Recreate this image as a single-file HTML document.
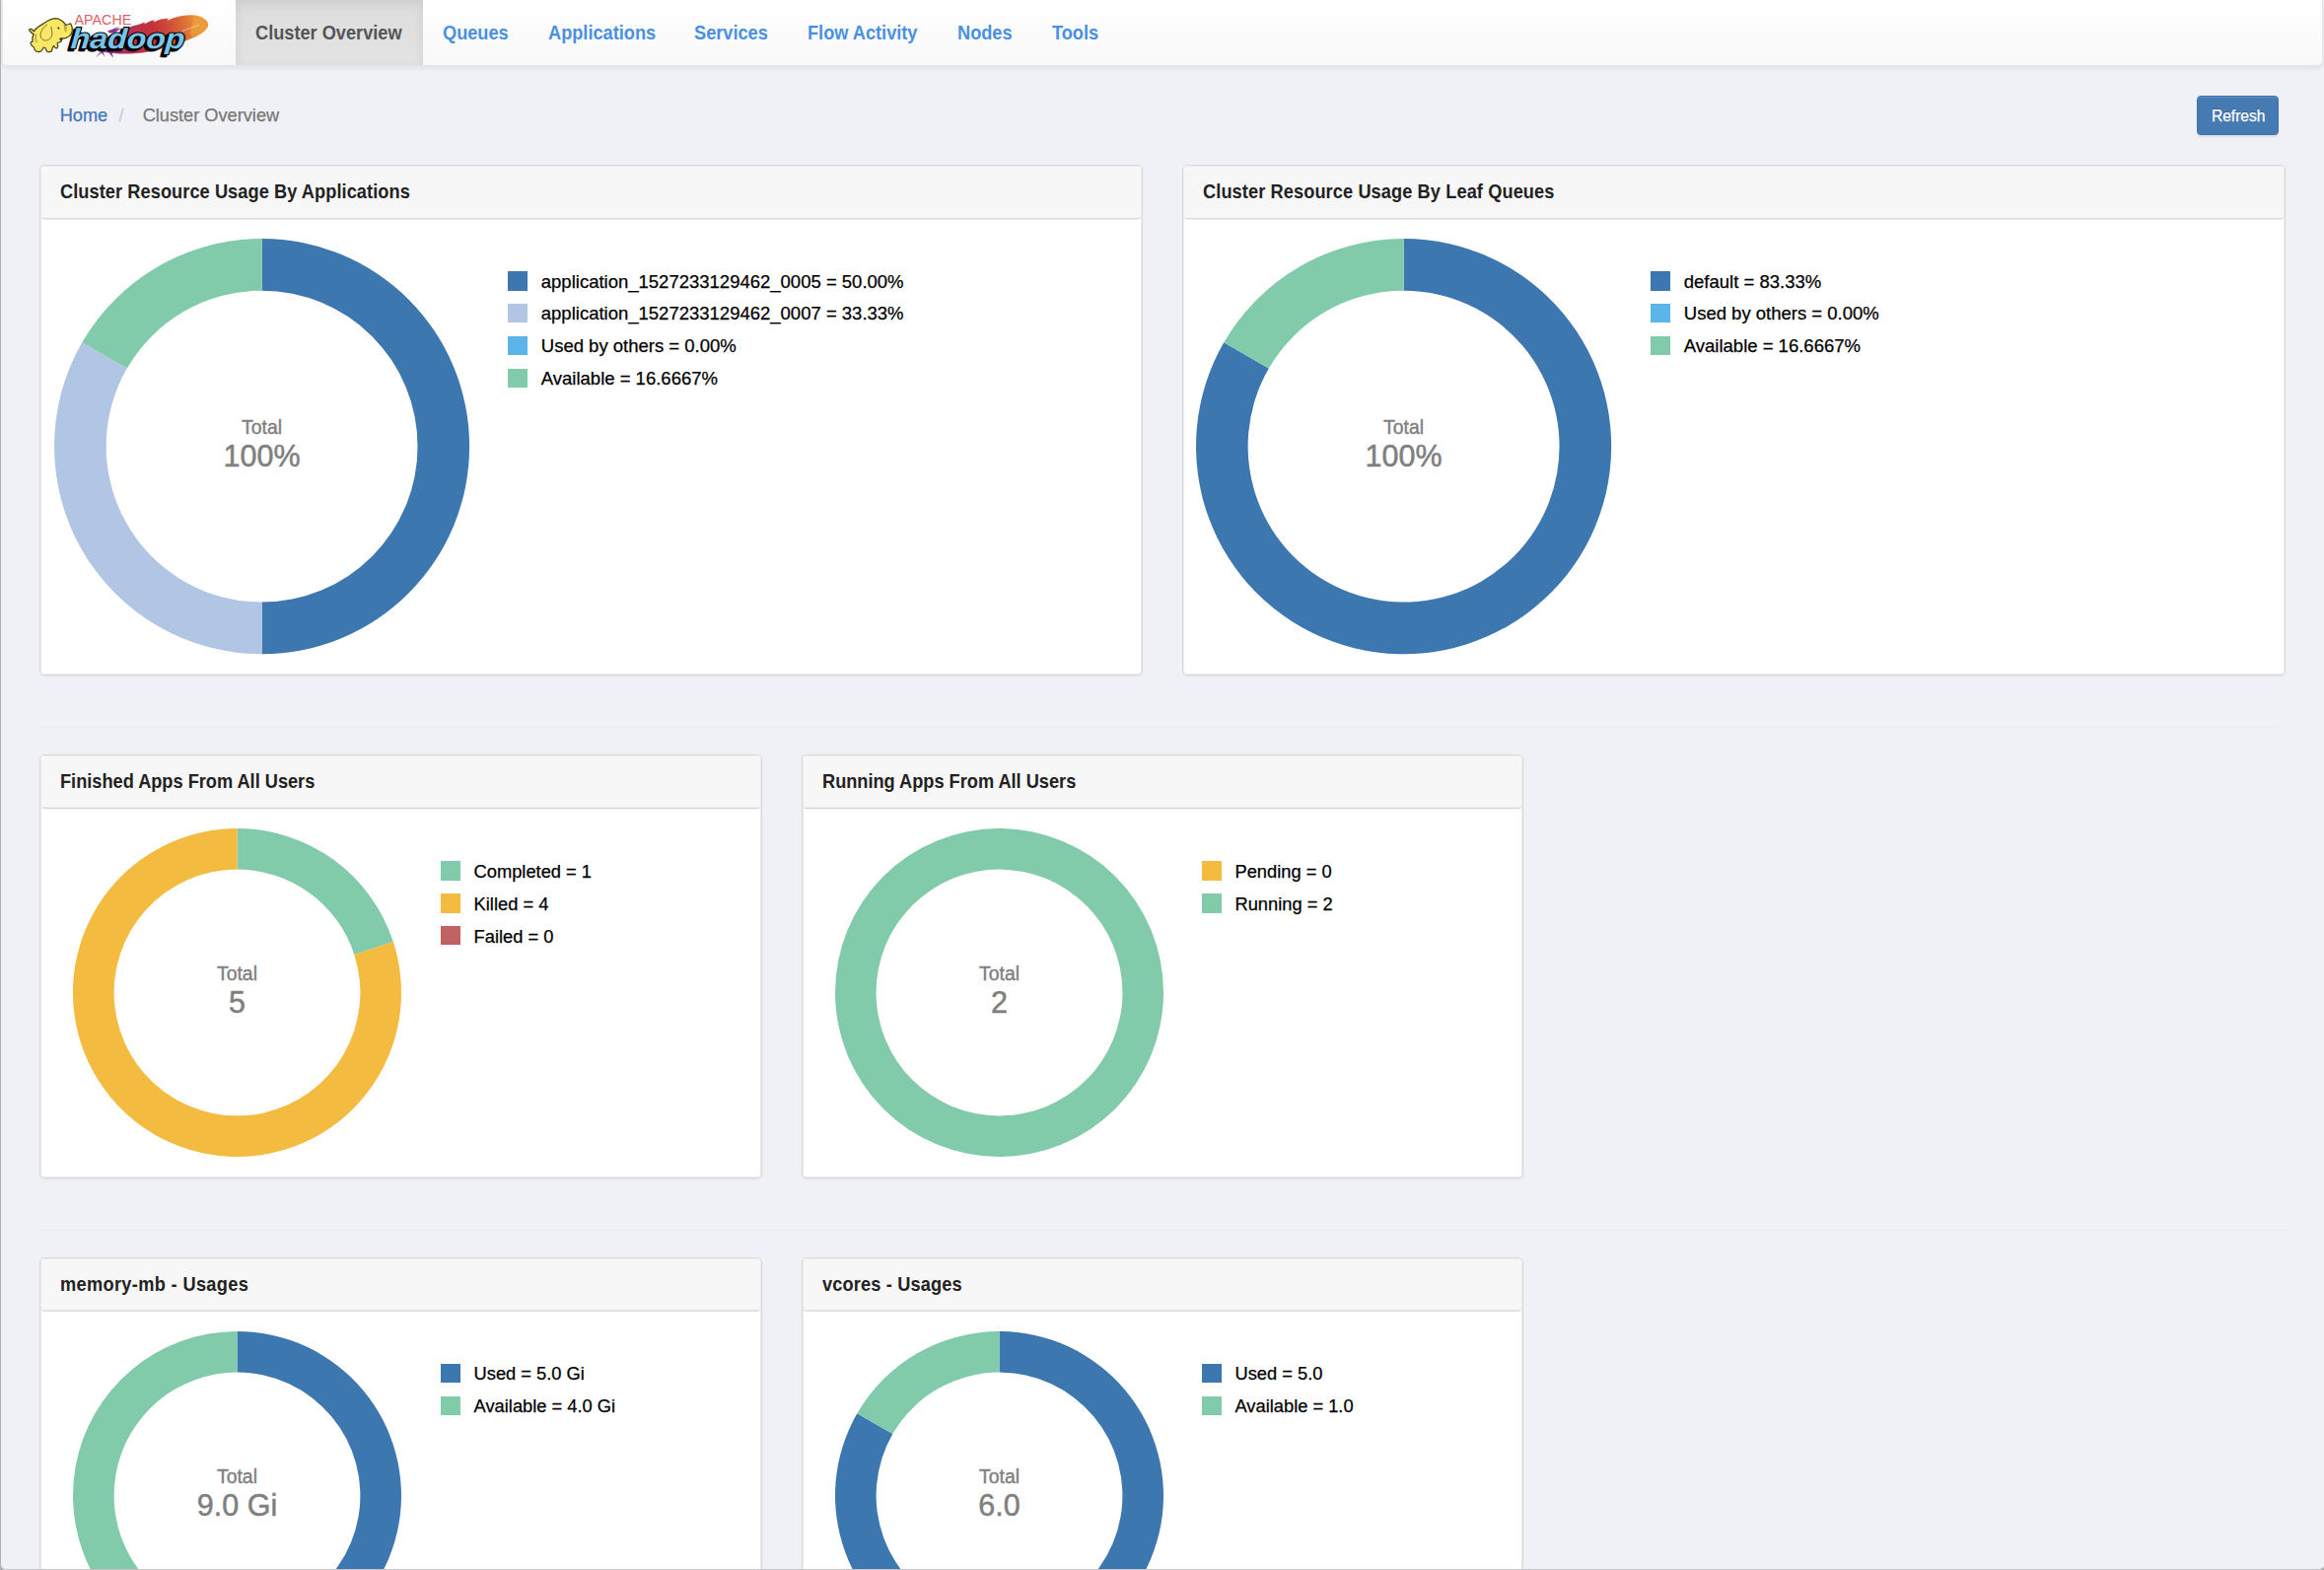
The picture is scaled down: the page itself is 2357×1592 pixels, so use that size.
<!DOCTYPE html>
<html lang="en"><head><meta charset="utf-8"><title>YARN</title>
<style>
html,body{margin:0;padding:0}
body{width:2357px;height:1592px;overflow:hidden;background:#f0f1f6;font-family:"Liberation Sans", sans-serif;position:relative}
.t{position:absolute;white-space:nowrap;text-decoration:none}
.nav{position:absolute;left:1.5px;top:-1px;width:2354.5px;height:67.6px;box-sizing:border-box;background:linear-gradient(to bottom,#fff 0,#f8f8f8 100%);border:1.3px solid #e7e7e7;border-radius:0 0 5px 5px;box-shadow:0 1.3px 5.5px rgba(0,0,0,.075)}
.active{position:absolute;left:239.2px;top:0;width:189.4px;height:66.4px;background:linear-gradient(to bottom,#dddddd 0,#e3e3e3 100%);box-shadow:inset 0 4px 12px rgba(0,0,0,.075)}
.btn{position:absolute;left:2228px;top:96.9px;width:83.3px;height:39.9px;box-sizing:border-box;border-radius:4px;background:#467ab3;border:1.3px solid #3f73ad;box-shadow:inset 0 1.3px 0 rgba(255,255,255,.15),0 1.3px 1.3px rgba(0,0,0,.075)}
.panel{position:absolute;box-sizing:border-box;background:#fff;border:1px solid #dbdbdc;border-radius:5px;box-shadow:0 1px 2px rgba(0,0,0,.06);overflow:hidden}
.pin{box-sizing:border-box;height:100%;border:1px solid #ebebeb;border-radius:4px}
.ph{height:53px;box-sizing:border-box;background:#f7f7f7;border-bottom:1px solid #dadada;box-shadow:0 1px 0 #eee;border-radius:3px}
.sq{position:absolute;width:20px;height:19.6px}
.donut{position:absolute;font-family:"Liberation Sans", sans-serif}
.hr{position:absolute;left:40.3px;width:2276.7px;height:2px;background:linear-gradient(#ededec 50%,#eff0f3 50%)}
.frame{position:absolute;left:0;top:-20px;width:2358px;height:1612px;box-sizing:border-box;border-left:1px solid #b0b0b1;border-bottom:1px solid #c6c6ca;border-radius:0 0 7px 6px;box-shadow:0 0 0 12px #a8a8aa;pointer-events:none}
</style></head>
<body>
<div class="nav"></div>
<div class="active"></div>
<a href="#" class="t" style="left:258.8px;top:20.87px;font-size:19.3px;line-height:25.09px;font-weight:bold;color:#555;;transform:scaleX(.943);transform-origin:0 50%">Cluster Overview</a>
<a href="#" class="t" style="left:448.8px;top:20.87px;font-size:19.3px;line-height:25.09px;font-weight:bold;color:#4a90e2;;transform:scaleX(.943);transform-origin:0 50%">Queues</a>
<a href="#" class="t" style="left:555.6px;top:20.87px;font-size:19.3px;line-height:25.09px;font-weight:bold;color:#4a90e2;;transform:scaleX(.943);transform-origin:0 50%">Applications</a>
<a href="#" class="t" style="left:703.8px;top:20.87px;font-size:19.3px;line-height:25.09px;font-weight:bold;color:#4a90e2;;transform:scaleX(.943);transform-origin:0 50%">Services</a>
<a href="#" class="t" style="left:819px;top:20.87px;font-size:19.3px;line-height:25.09px;font-weight:bold;color:#4a90e2;;transform:scaleX(.943);transform-origin:0 50%">Flow Activity</a>
<a href="#" class="t" style="left:970.8px;top:20.87px;font-size:19.3px;line-height:25.09px;font-weight:bold;color:#4a90e2;;transform:scaleX(.943);transform-origin:0 50%">Nodes</a>
<a href="#" class="t" style="left:1066.6px;top:20.87px;font-size:19.3px;line-height:25.09px;font-weight:bold;color:#4a90e2;;transform:scaleX(.943);transform-origin:0 50%">Tools</a>
<svg class="logo" style="position:absolute;left:0;top:0" width="230" height="66" viewBox="0 0 230 66">
<defs>
<linearGradient id="fg" gradientUnits="userSpaceOnUse" x1="100" y1="50" x2="212" y2="22">
<stop offset="0" stop-color="#7d2a8c"/><stop offset="0.16" stop-color="#9b2c72"/><stop offset="0.3" stop-color="#b8314f"/><stop offset="0.52" stop-color="#c4323a"/><stop offset="0.66" stop-color="#cf4f3a"/><stop offset="0.8" stop-color="#dd7436"/><stop offset="0.88" stop-color="#e88f38"/><stop offset="1" stop-color="#ee9e3c"/>
</linearGradient>
</defs>
<!-- feather -->
<path fill="url(#fg)" d="M104,52.5 C112,41 122,32 134,26.6 L141,24.8 L147,22.6 L146.2,24.6 L152,21.4 L157,20.2 L155.5,22.6 L163,19.6 L171,18.6 L169.4,21 C178,17 188,14.6 197,15.6 C205,16.6 211,20.5 211.2,25 C211,30 203,35.5 193,39.5 C180,45 165,49.5 150,52.4 C137,54.8 120,55.6 104,52.5 Z"/>
<path fill="#ec9c3c" opacity=".75" d="M197,15.6 C205,16.6 211,20.5 211.2,25 C211,30 203,35.5 196,38.4 L192.5,34 C194.5,28 196,21 197,15.6 Z"/>
<path fill="none" stroke="#fbe9d8" stroke-width=".7" opacity=".8" d="M185,31.5 C191,29 197,27 202,25.2"/>
<!-- purple spikes -->
<path fill="#8c3493" d="M109,31.6 L121.5,26.8 L117.5,29.6 L123,28.6 L116,33.4 L111,33.6 Z"/>
<path fill="#8c3493" d="M97,58.6 L103.5,50.6 L109,50.6 L104.6,53 L106.5,57.4 L102.8,53.6 Z M108.5,50.8 L118,51.6 L113.4,53 L115,58.8 L110,53 Z"/>
<!-- APACHE -->
<text x="75.6" y="25.4" font-family="'Liberation Sans',sans-serif" font-size="15.2" textLength="57.6" lengthAdjust="spacingAndGlyphs" fill="#db6466">APACHE</text>
<!-- hadoop -->
<g transform="translate(71.3,48.9) skewX(-4)" font-family="'Liberation Sans',sans-serif" font-weight="bold" font-style="italic" font-size="28.8">
<text x="-2.3" y="1.7" textLength="115.5" lengthAdjust="spacingAndGlyphs" fill="#000" stroke="#000" stroke-width="2.4" stroke-linejoin="round">hadoop</text>
<text x="0" y="0" textLength="115.5" lengthAdjust="spacingAndGlyphs" fill="#79c3e6" stroke="#000" stroke-width="2.2" stroke-linejoin="round" paint-order="stroke">hadoop</text>
</g>
<!-- elephant -->
<g transform="translate(20,5) scale(0.04303)" stroke-linejoin="round" stroke-linecap="round">
<path fill="#f9e766" stroke="#4e4718" stroke-width="30" d="M330,700 C290,670 250,640 222,590 C235,560 285,560 300,590 C315,600 325,615 335,625 C360,580 420,520 560,440 C640,380 740,320 840,315 C940,320 1030,390 1085,470 C1120,475 1160,450 1195,440 C1225,470 1240,540 1238,610 C1225,690 1180,745 1100,775 C1060,790 1020,790 985,790 C1000,830 985,870 930,880 C900,882 885,895 885,910 C905,950 905,1000 880,1012 C860,1018 835,1015 828,1000 C822,985 820,970 800,962 C780,985 765,1030 760,1060 C755,1095 730,1108 690,1108 C650,1108 625,1090 622,1050 C620,1025 600,1005 565,1000 C545,1030 530,1060 510,1085 C480,1105 420,1105 380,1090 C350,1070 345,1030 335,1000 C300,985 270,950 258,905 C250,880 270,860 300,870 C290,810 300,740 330,690 Z"/>
<path fill="none" stroke="#6b6127" stroke-width="20" d="M640,470 C560,520 490,620 490,720 C495,800 560,850 640,835 C710,815 760,760 765,680 C765,620 750,560 740,520"/>
<path fill="none" stroke="#6b6127" stroke-width="16" d="M1050,470 C1060,500 1075,540 1060,580 M1085,470 C1100,520 1100,580 1085,630 M380,700 C370,760 370,830 400,880"/>
<circle cx="915" cy="545" r="24" fill="#2a2612"/>
<ellipse cx="972" cy="805" rx="34" ry="28" fill="#2a2612"/>
</g>
</svg>

<a href="#" class="t" style="left:60.7px;top:106.16px;font-size:18.2px;line-height:23.66px;font-weight:normal;color:#4178b5;;-webkit-text-stroke:.25px">Home</a>
<span class="t" style="left:120.6px;top:106.16px;font-size:18.2px;line-height:23.66px;font-weight:normal;color:#ccc;;-webkit-text-stroke:.25px">/</span>
<span class="t" style="left:144.7px;top:106.16px;font-size:18.2px;line-height:23.66px;font-weight:normal;color:#777;;-webkit-text-stroke:.25px">Cluster Overview</span>
<div class="btn"></div>
<span class="t" style="left:2242.9px;top:107.75px;font-size:15.6px;line-height:20.28px;font-weight:normal;color:#fff;text-shadow:0 -1px 0 rgba(0,0,0,.2);-webkit-text-stroke:.25px">Refresh</span>
<div class="panel" style="left:40px;top:167px;width:1119px;height:518px"><div class="pin"><div class="ph" style=""></div></div></div><span class="t" style="left:60.7px;top:182.27px;font-size:19.3px;line-height:25.09px;font-weight:bold;color:#222;letter-spacing:0.08px;transform:scaleX(.943);transform-origin:0 50%">Cluster Resource Usage By Applications</span>
<div class="panel" style="left:1199px;top:167px;width:1119px;height:518px"><div class="pin"><div class="ph" style=""></div></div></div><span class="t" style="left:1219.7px;top:182.27px;font-size:19.3px;line-height:25.09px;font-weight:bold;color:#222;letter-spacing:0.11px;transform:scaleX(.943);transform-origin:0 50%">Cluster Resource Usage By Leaf Queues</span>
<svg class="donut" style="left:50.50px;top:238.00px" width="429.20" height="429.20" viewBox="50.50 238.00 429.20 429.20">
<path fill="#3c77b0" fill-rule="evenodd" d="M265.10,242.00 A210.6,210.6 0 0 1 265.10,663.20 L265.10,610.55 A157.95,157.95 0 0 0 265.10,294.65 Z"/>
<path fill="#b1c5e4" fill-rule="evenodd" d="M265.10,663.20 A210.6,210.6 0 0 1 82.72,347.30 L128.31,373.62 A157.95,157.95 0 0 0 265.10,610.55 Z"/>
<path fill="#81cbaa" fill-rule="evenodd" d="M82.72,347.30 A210.6,210.6 0 0 1 265.10,242.00 L265.10,294.65 A157.95,157.95 0 0 0 128.31,373.62 Z"/>
<text x="265.1" y="440.0" text-anchor="middle" font-size="19.4" fill="#7f7f7f" stroke="#7f7f7f" stroke-width=".4">Total</text>
<text x="265.1" y="473.1" text-anchor="middle" font-size="30.5" fill="#7f7f7f" stroke="#7f7f7f" stroke-width=".5">100%</text>
</svg>
<svg class="donut" style="left:1209.30px;top:238.00px" width="429.20" height="429.20" viewBox="1209.30 238.00 429.20 429.20">
<path fill="#3c77b0" fill-rule="evenodd" d="M1423.90,242.00 A210.6,210.6 0 1 1 1241.52,347.30 L1287.11,373.62 A157.95,157.95 0 1 0 1423.90,294.65 Z"/>
<path fill="#81cbaa" fill-rule="evenodd" d="M1241.52,347.30 A210.6,210.6 0 0 1 1423.90,242.00 L1423.90,294.65 A157.95,157.95 0 0 0 1287.11,373.62 Z"/>
<text x="1423.9" y="440.0" text-anchor="middle" font-size="19.4" fill="#7f7f7f" stroke="#7f7f7f" stroke-width=".4">Total</text>
<text x="1423.9" y="473.1" text-anchor="middle" font-size="30.5" fill="#7f7f7f" stroke="#7f7f7f" stroke-width=".5">100%</text>
</svg>
<div class="sq" style="left:515.1px;top:275.1px;background:#3c77b0"></div>
<span class="t" style="left:548.8000000000001px;top:273.66px;font-size:18.5px;line-height:24.05px;font-weight:normal;color:#000;;-webkit-text-stroke:.25px">application_1527233129462_0005 = 50.00%</span>
<div class="sq" style="left:515.1px;top:307.9px;background:#b1c5e4"></div>
<span class="t" style="left:548.8000000000001px;top:306.46px;font-size:18.5px;line-height:24.05px;font-weight:normal;color:#000;;-webkit-text-stroke:.25px">application_1527233129462_0007 = 33.33%</span>
<div class="sq" style="left:515.1px;top:340.7px;background:#5cb5e9"></div>
<span class="t" style="left:548.8000000000001px;top:339.26px;font-size:18.5px;line-height:24.05px;font-weight:normal;color:#000;;-webkit-text-stroke:.25px">Used by others = 0.00%</span>
<div class="sq" style="left:515.1px;top:373.5px;background:#81cbaa"></div>
<span class="t" style="left:548.8000000000001px;top:372.06px;font-size:18.5px;line-height:24.05px;font-weight:normal;color:#000;;-webkit-text-stroke:.25px">Available = 16.6667%</span>
<div class="sq" style="left:1674.1px;top:275.1px;background:#3c77b0"></div>
<span class="t" style="left:1707.8px;top:273.66px;font-size:18.5px;line-height:24.05px;font-weight:normal;color:#000;;-webkit-text-stroke:.25px">default = 83.33%</span>
<div class="sq" style="left:1674.1px;top:307.9px;background:#5cb5e9"></div>
<span class="t" style="left:1707.8px;top:306.46px;font-size:18.5px;line-height:24.05px;font-weight:normal;color:#000;;-webkit-text-stroke:.25px">Used by others = 0.00%</span>
<div class="sq" style="left:1674.1px;top:340.7px;background:#81cbaa"></div>
<span class="t" style="left:1707.8px;top:339.26px;font-size:18.5px;line-height:24.05px;font-weight:normal;color:#000;;-webkit-text-stroke:.25px">Available = 16.6667%</span>
<div class="hr" style="top:737px"></div>
<div class="panel" style="left:40px;top:765px;width:733px;height:430px"><div class="pin"><div class="ph" style="border-bottom-color:#d5d5d5;box-shadow:0 1px 0 #f5f5f5,inset 0 -1px 0 #efefef"></div></div></div><span class="t" style="left:60.7px;top:780.27px;font-size:19.3px;line-height:25.09px;font-weight:bold;color:#222;letter-spacing:0px;transform:scaleX(.943);transform-origin:0 50%">Finished Apps From All Users</span>
<div class="panel" style="left:813px;top:765px;width:732px;height:430px"><div class="pin"><div class="ph" style="border-bottom-color:#d5d5d5;box-shadow:0 1px 0 #f5f5f5,inset 0 -1px 0 #efefef"></div></div></div><span class="t" style="left:833.7px;top:780.27px;font-size:19.3px;line-height:25.09px;font-weight:bold;color:#222;letter-spacing:0px;transform:scaleX(.943);transform-origin:0 50%">Running Apps From All Users</span>
<svg class="donut" style="left:70.45px;top:836.00px" width="341.00" height="341.00" viewBox="70.45 836.00 341.00 341.00">
<path fill="#81cbaa" fill-rule="evenodd" d="M240.95,840.00 A166.5,166.5 0 0 1 399.30,955.05 L359.71,967.91 A124.875,124.875 0 0 0 240.95,881.62 Z"/>
<path fill="#f4bb41" fill-rule="evenodd" d="M399.30,955.05 A166.5,166.5 0 1 1 240.95,840.00 L240.95,881.62 A124.875,124.875 0 1 0 359.71,967.91 Z"/>
<text x="240.95" y="993.9" text-anchor="middle" font-size="19.4" fill="#7f7f7f" stroke="#7f7f7f" stroke-width=".4">Total</text>
<text x="240.95" y="1027.0" text-anchor="middle" font-size="30.5" fill="#7f7f7f" stroke="#7f7f7f" stroke-width=".5">5</text>
</svg>
<svg class="donut" style="left:842.60px;top:836.00px" width="341.00" height="341.00" viewBox="842.60 836.00 341.00 341.00">
<path fill="#81cbaa" fill-rule="evenodd" d="M1013.1,840.0 A166.5,166.5 0 1 1 1013.1,1173.0 A166.5,166.5 0 1 1 1013.1,840.0 Z M1013.1,881.625 A124.875,124.875 0 1 0 1013.1,1131.375 A124.875,124.875 0 1 0 1013.1,881.625 Z"/>
<text x="1013.1" y="993.9" text-anchor="middle" font-size="19.4" fill="#7f7f7f" stroke="#7f7f7f" stroke-width=".4">Total</text>
<text x="1013.1" y="1027.0" text-anchor="middle" font-size="30.5" fill="#7f7f7f" stroke="#7f7f7f" stroke-width=".5">2</text>
</svg>
<div class="sq" style="left:446.9px;top:873.2px;background:#81cbaa"></div>
<span class="t" style="left:480.59999999999997px;top:871.96px;font-size:18.3px;line-height:23.79px;font-weight:normal;color:#000;;-webkit-text-stroke:.25px">Completed = 1</span>
<div class="sq" style="left:446.9px;top:906.0px;background:#f4bb41"></div>
<span class="t" style="left:480.59999999999997px;top:904.76px;font-size:18.3px;line-height:23.79px;font-weight:normal;color:#000;;-webkit-text-stroke:.25px">Killed = 4</span>
<div class="sq" style="left:446.9px;top:938.8px;background:#c16262"></div>
<span class="t" style="left:480.59999999999997px;top:937.56px;font-size:18.3px;line-height:23.79px;font-weight:normal;color:#000;;-webkit-text-stroke:.25px">Failed = 0</span>
<div class="sq" style="left:1218.8px;top:873.2px;background:#f4bb41"></div>
<span class="t" style="left:1252.5px;top:871.96px;font-size:18.3px;line-height:23.79px;font-weight:normal;color:#000;;-webkit-text-stroke:.25px">Pending = 0</span>
<div class="sq" style="left:1218.8px;top:906.0px;background:#81cbaa"></div>
<span class="t" style="left:1252.5px;top:904.76px;font-size:18.3px;line-height:23.79px;font-weight:normal;color:#000;;-webkit-text-stroke:.25px">Running = 2</span>
<div class="hr" style="top:1247px"></div>
<div class="panel" style="left:40px;top:1275px;width:733px;height:430px"><div class="pin"><div class="ph" style="height:52px;border-bottom-color:#e4e4e4;box-shadow:0 1px 0 #e0e0e0"></div></div></div><span class="t" style="left:60.7px;top:1290.27px;font-size:19.3px;line-height:25.09px;font-weight:bold;color:#222;letter-spacing:0.37px;transform:scaleX(.943);transform-origin:0 50%">memory-mb - Usages</span>
<div class="panel" style="left:813px;top:1275px;width:732px;height:430px"><div class="pin"><div class="ph" style="height:52px;border-bottom-color:#e4e4e4;box-shadow:0 1px 0 #e0e0e0"></div></div></div><span class="t" style="left:833.7px;top:1290.27px;font-size:19.3px;line-height:25.09px;font-weight:bold;color:#222;letter-spacing:0.17px;transform:scaleX(.943);transform-origin:0 50%">vcores - Usages</span>
<svg class="donut" style="left:70.45px;top:1345.50px" width="341.00" height="341.00" viewBox="70.45 1345.50 341.00 341.00">
<path fill="#3c77b0" fill-rule="evenodd" d="M240.95,1349.50 A166.5,166.5 0 1 1 184.00,1672.46 L198.24,1633.34 A124.875,124.875 0 1 0 240.95,1391.12 Z"/>
<path fill="#81cbaa" fill-rule="evenodd" d="M184.00,1672.46 A166.5,166.5 0 0 1 240.95,1349.50 L240.95,1391.12 A124.875,124.875 0 0 0 198.24,1633.34 Z"/>
<text x="240.95" y="1503.4" text-anchor="middle" font-size="19.4" fill="#7f7f7f" stroke="#7f7f7f" stroke-width=".4">Total</text>
<text x="240.95" y="1536.5" text-anchor="middle" font-size="30.5" fill="#7f7f7f" stroke="#7f7f7f" stroke-width=".5">9.0 Gi</text>
</svg>
<svg class="donut" style="left:842.60px;top:1345.50px" width="341.00" height="341.00" viewBox="842.60 1345.50 341.00 341.00">
<path fill="#3c77b0" fill-rule="evenodd" d="M1013.10,1349.50 A166.5,166.5 0 1 1 868.91,1432.75 L904.96,1453.56 A124.875,124.875 0 1 0 1013.10,1391.12 Z"/>
<path fill="#81cbaa" fill-rule="evenodd" d="M868.91,1432.75 A166.5,166.5 0 0 1 1013.10,1349.50 L1013.10,1391.12 A124.875,124.875 0 0 0 904.96,1453.56 Z"/>
<text x="1013.1" y="1503.4" text-anchor="middle" font-size="19.4" fill="#7f7f7f" stroke="#7f7f7f" stroke-width=".4">Total</text>
<text x="1013.1" y="1536.5" text-anchor="middle" font-size="30.5" fill="#7f7f7f" stroke="#7f7f7f" stroke-width=".5">6.0</text>
</svg>
<div class="sq" style="left:446.9px;top:1382.7px;background:#3c77b0"></div>
<span class="t" style="left:480.59999999999997px;top:1381.46px;font-size:18.3px;line-height:23.79px;font-weight:normal;color:#000;;-webkit-text-stroke:.25px">Used = 5.0 Gi</span>
<div class="sq" style="left:446.9px;top:1415.5px;background:#81cbaa"></div>
<span class="t" style="left:480.59999999999997px;top:1414.26px;font-size:18.3px;line-height:23.79px;font-weight:normal;color:#000;;-webkit-text-stroke:.25px">Available = 4.0 Gi</span>
<div class="sq" style="left:1218.8px;top:1382.7px;background:#3c77b0"></div>
<span class="t" style="left:1252.5px;top:1381.46px;font-size:18.3px;line-height:23.79px;font-weight:normal;color:#000;;-webkit-text-stroke:.25px">Used = 5.0</span>
<div class="sq" style="left:1218.8px;top:1415.5px;background:#81cbaa"></div>
<span class="t" style="left:1252.5px;top:1414.26px;font-size:18.3px;line-height:23.79px;font-weight:normal;color:#000;;-webkit-text-stroke:.25px">Available = 1.0</span>
<div class="frame"></div>
</body></html>
